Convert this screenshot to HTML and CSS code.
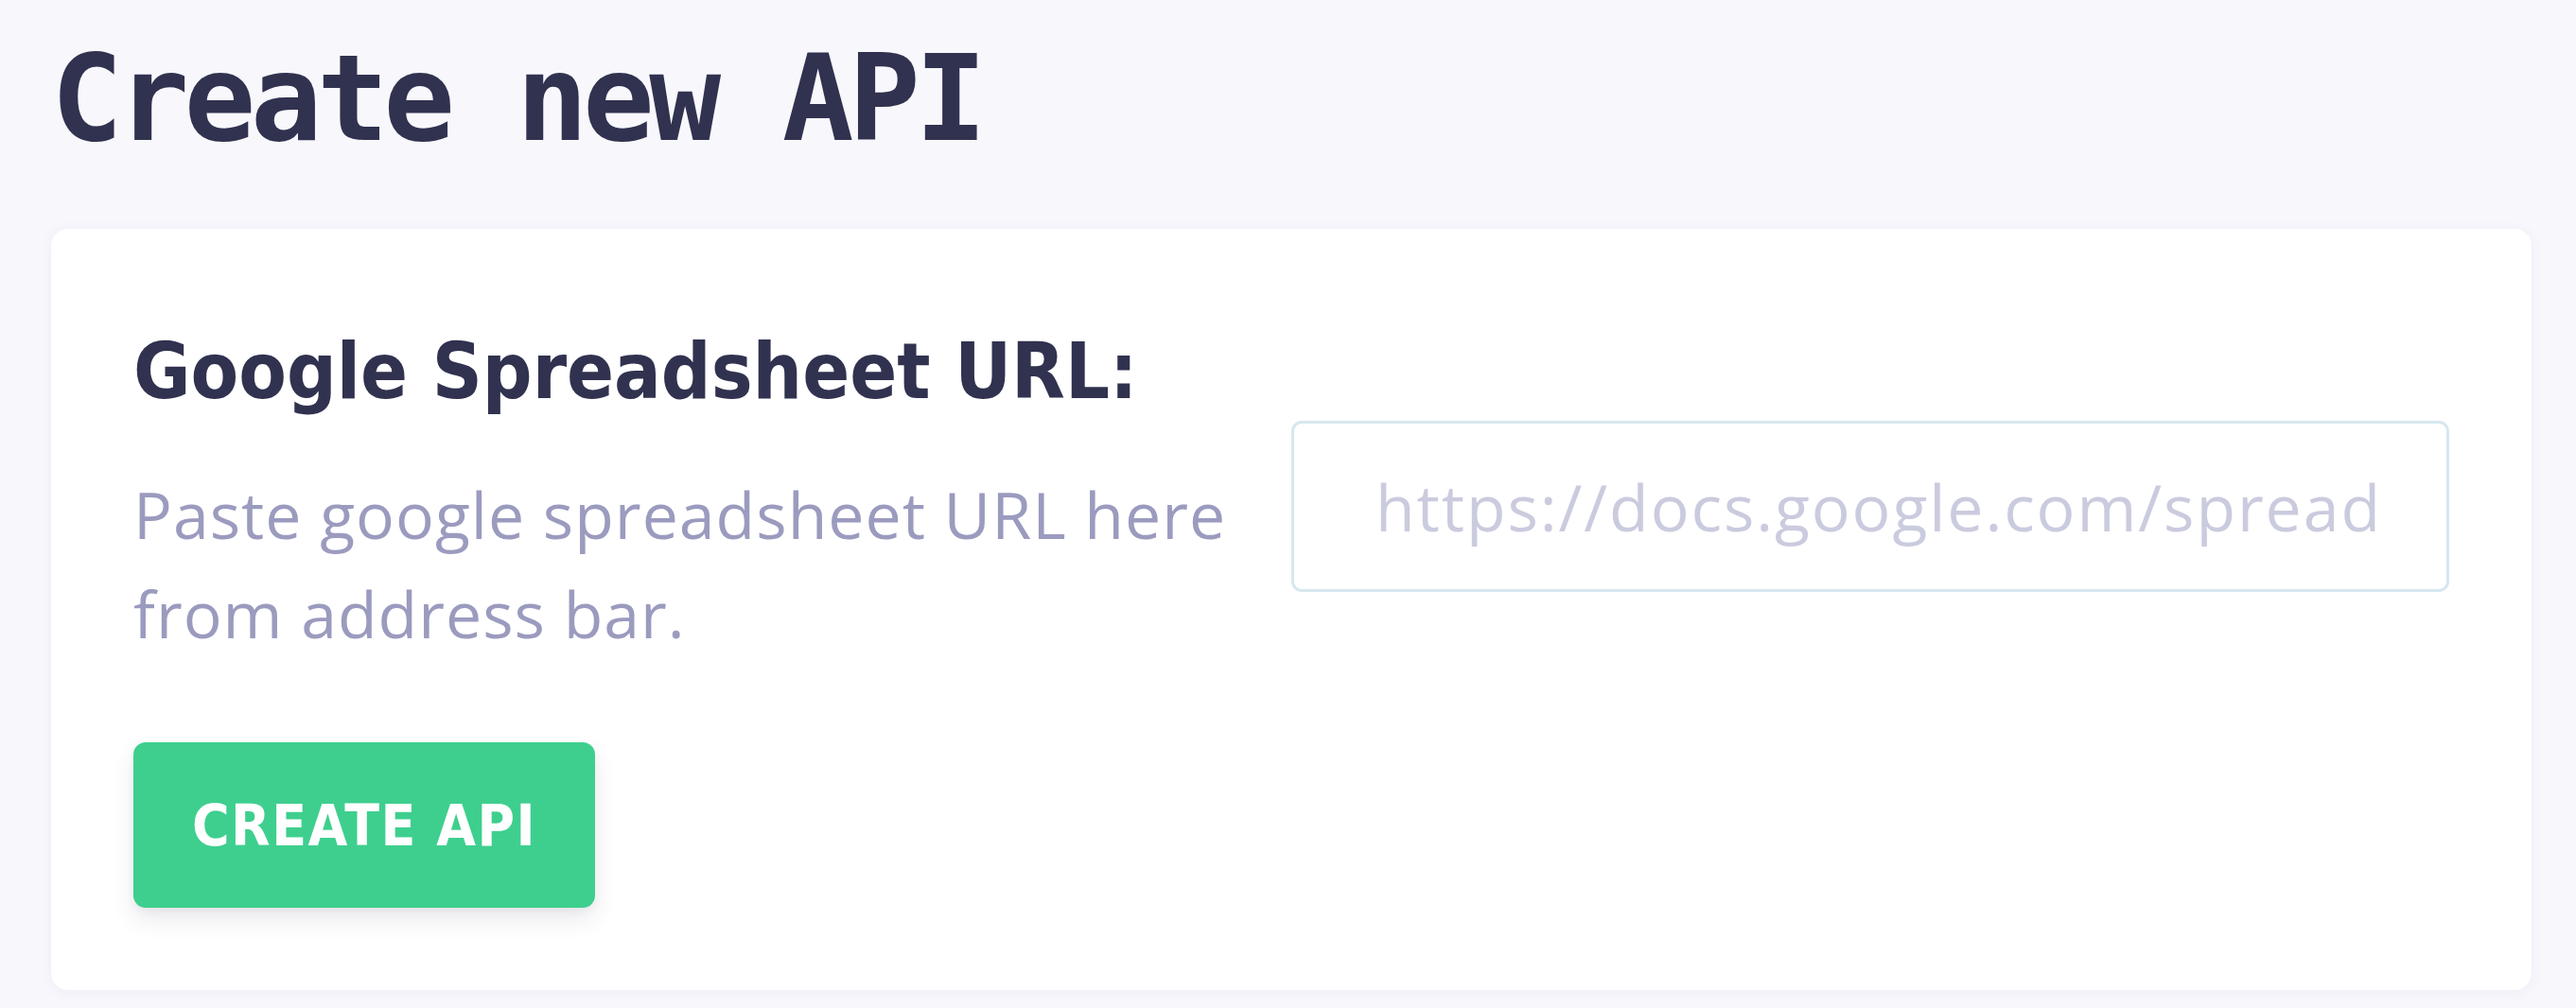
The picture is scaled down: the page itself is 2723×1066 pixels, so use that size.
FILE: index.html
```html
<!DOCTYPE html>
<html lang="en">
<head>
<meta charset="utf-8">
<title>Create new API</title>
<link rel="stylesheet" href="styles.css">
</head>
<body>
<main class="page">
  <h1 class="page-title">Create new API</h1>
  <section class="card">
    <div class="form-row">
      <div class="field-info">
        <h2 class="field-label">Google Spreadsheet URL:</h2>
        <p class="field-help">Paste google spreadsheet URL here from address bar.</p>
      </div>
      <input class="url-input" type="text" placeholder="https://docs.google.com/spread">
    </div>
    <button class="create-btn" type="button">CREATE API</button>
  </section>
</main>
</body>
</html>
```

FILE: styles.css
```css
html, body {
  margin: 0;
  padding: 0;
  background: #f7f7fc;
}

.page {
  padding: 30px 47px 19px 54px;
  font-family: "Open Sans", "Noto Sans", sans-serif;
}

.page-title {
  margin: 0 0 62px 0;
  font-family: "DejaVu Sans Mono", monospace;
  font-weight: bold;
  font-size: 126px;
  line-height: 150px;
  letter-spacing: -5.6px;
  color: #30324f;
}

.card {
  background: #ffffff;
  border-radius: 18px;
  padding: 87px;
  box-shadow: 0 2px 14px rgba(60, 60, 130, 0.06);
}

.form-row {
  display: grid;
  grid-template-columns: 1fr 1fr;
  align-items: start;
}

.field-label {
  margin: 0;
  font-family: "DejaVu Sans Condensed", "DejaVu Sans", sans-serif;
  font-stretch: condensed;
  font-weight: bold;
  font-size: 82px;
  line-height: 128px;
  color: #30324f;
}

.field-help {
  margin: 34px 0 0 0;
  font-size: 68px;
  line-height: 105px;
  letter-spacing: 1px;
  color: #9b9bbf;
  padding-right: 40px;
}

.url-input {
  margin-top: 116px;
  box-sizing: border-box;
  width: 100%;
  height: 181px;
  border: 3px solid #d6e7ef;
  border-radius: 11px;
  padding: 0 60px 0 86px;
  font-family: "Open Sans", "Noto Sans", sans-serif;
  font-size: 68px;
  letter-spacing: 1.9px;
  color: #30324f;
  background: #ffffff;
  outline: none;
}

.url-input::placeholder {
  color: #cbcbdf;
}

.create-btn {
  margin-top: 84px;
  display: block;
  width: 488px;
  height: 175px;
  border: none;
  border-radius: 13px;
  background: #3ecf8e;
  color: #ffffff;
  font-family: "DejaVu Sans Condensed", "DejaVu Sans", sans-serif;
  font-stretch: condensed;
  font-weight: bold;
  font-size: 60px;
  letter-spacing: 1.5px;
  box-shadow: 0 12px 24px rgba(50, 50, 93, 0.10), 0 4px 8px rgba(0, 0, 0, 0.04);
  cursor: pointer;
}
```
